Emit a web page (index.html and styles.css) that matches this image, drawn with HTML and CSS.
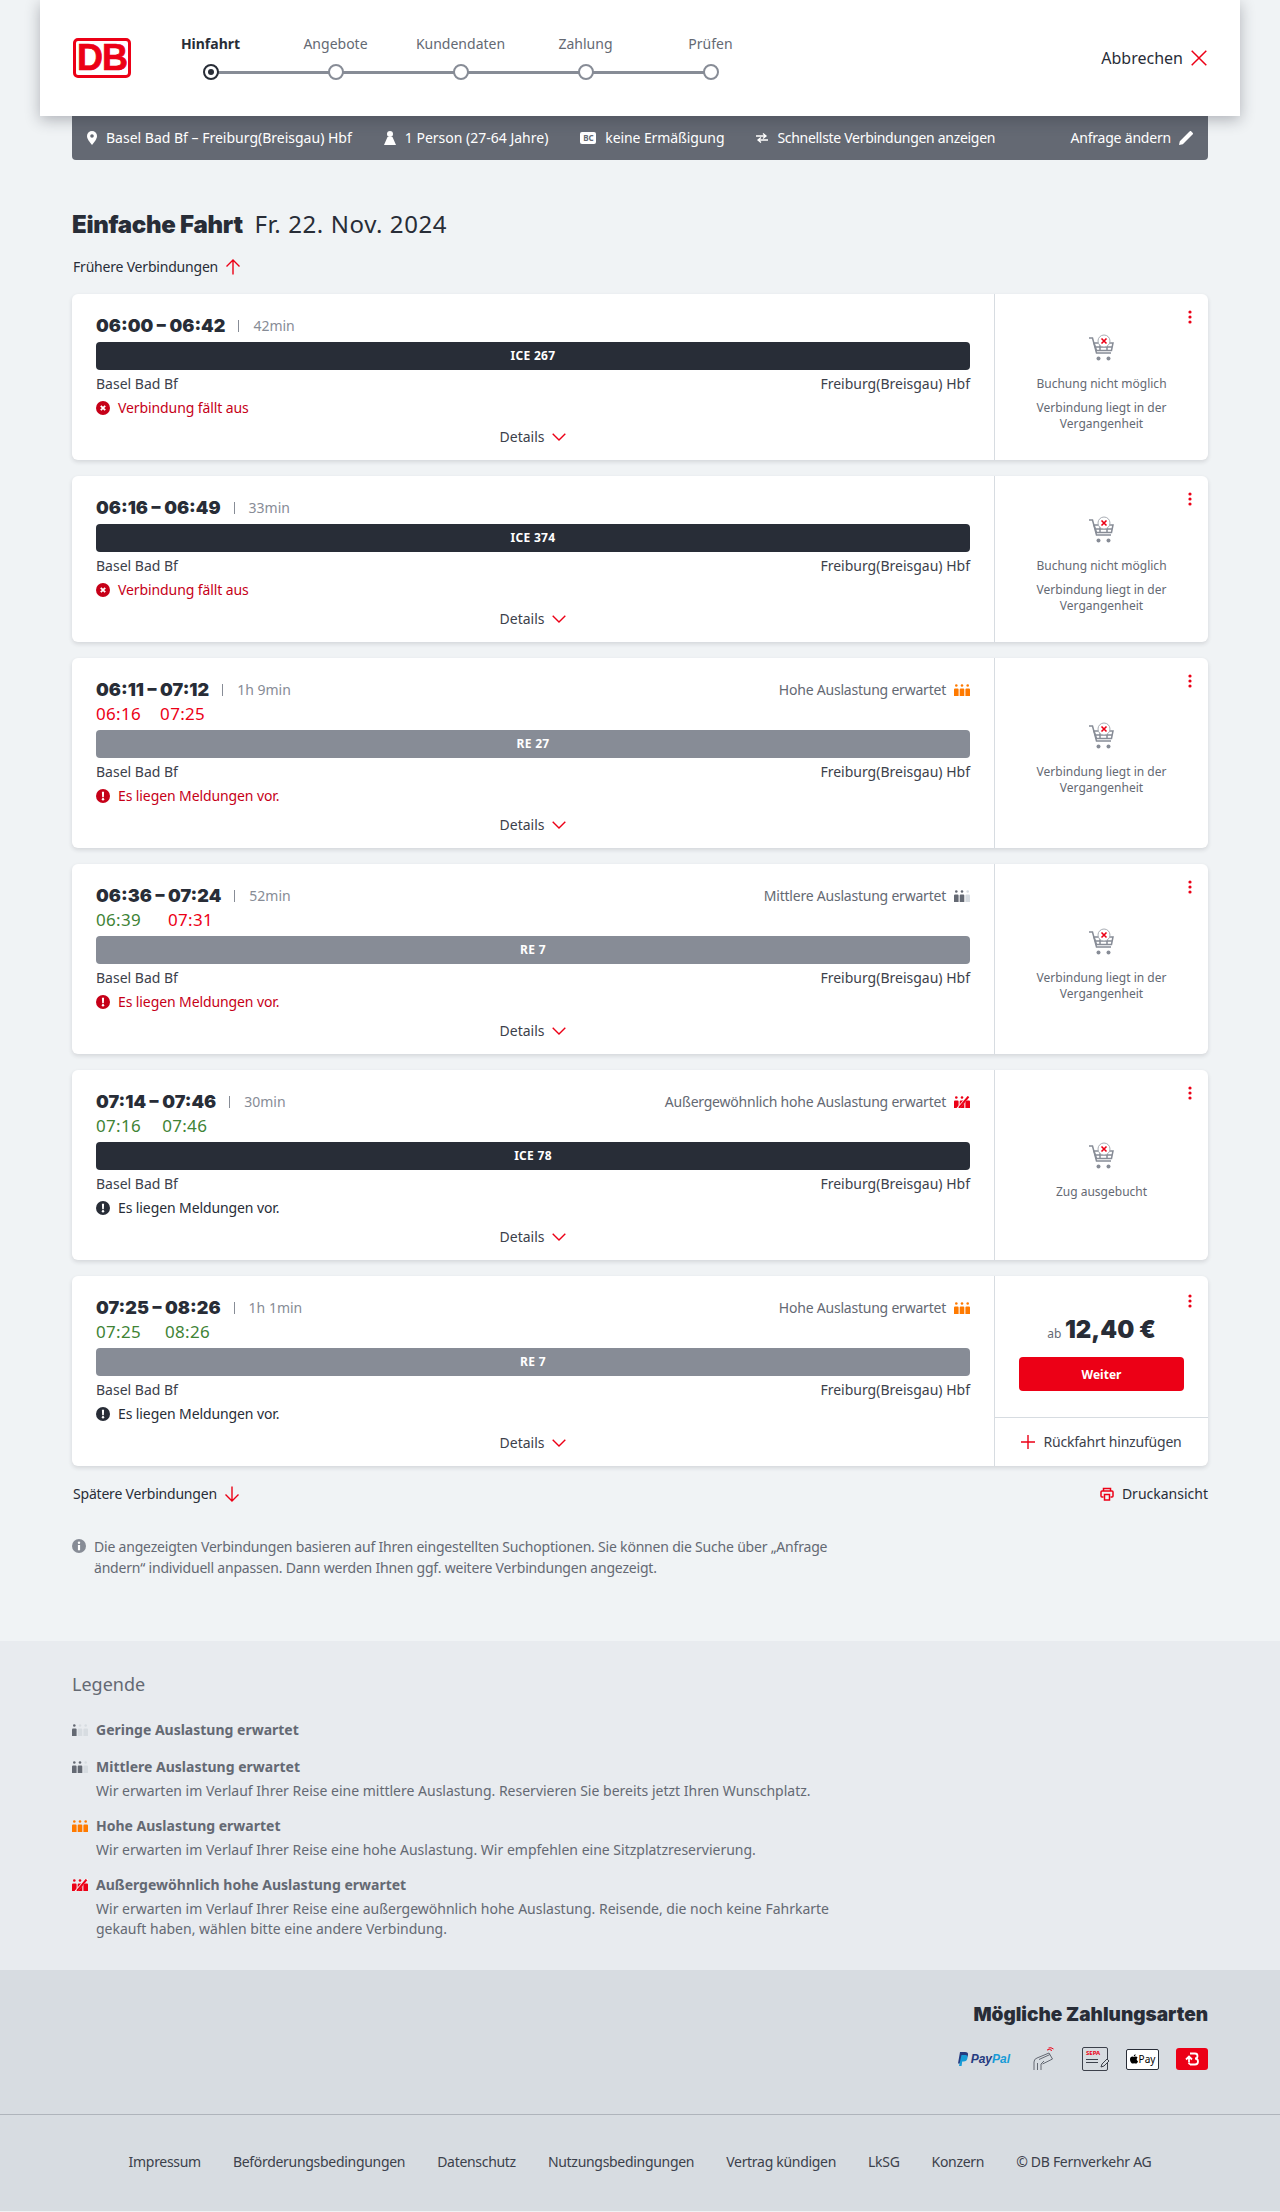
FILE: index.html
```html
<!DOCTYPE html>
<html lang="de">

<head>
    <title>Reiseauskunft</title>
    <meta charset="utf-8">
    <meta name="viewport" content="width=device-width, initial-scale=1.0">
    <link rel="stylesheet" href="styles.css">
</head>

<body>

    <svg class="sprites" aria-hidden="true">
        <symbol id="i-cart" viewBox="0 0 28 28">
            <path d="M1 4h3.5l4 15h14.500" fill="none" stroke="#878c96" stroke-width="1.500"/>
            <path d="M6 9h19l-1.500 7.500h-15zM7.500 13h16.500M12 9.500v7M19 9.500v7" fill="none" stroke="#878c96" stroke-width="1.500"/>
            <circle cx="10.500" cy="24.500" r="2" fill="#878c96"/>
            <circle cx="20.500" cy="24.500" r="2" fill="#878c96"/>
            <circle cx="16" cy="7" r="6" fill="#fff" stroke="#a9adb4" stroke-width="1"/>
            <path d="M13.500 4.500l5 5M18.500 4.500l-5 5" stroke="#ec0016" stroke-width="1.600"/>
        </symbol>
        <symbol id="i-load1" viewBox="0 0 16 12">
            <g fill="#d7dce1"><circle cx="8" cy="1.500" r="1.300"/><circle cx="13.700" cy="1.500" r="1.300"/><path d="M5.700 5.500q0-1 1-1h2.600q1 0 1 1V12H5.700zM11.400 5.500q0-1 1-1h2.600q1 0 1 1V12h-4.600z"/></g>
            <g fill="#646973"><circle cx="2.300" cy="1.500" r="1.300"/><path d="M0 5.500q0-1 1-1h2.600q1 0 1 1V12H0z"/></g>
        </symbol>
        <symbol id="i-load2" viewBox="0 0 16 12">
            <g fill="#d7dce1"><circle cx="13.700" cy="1.500" r="1.300"/><path d="M11.400 5.500q0-1 1-1h2.600q1 0 1 1V12h-4.600z"/></g>
            <g fill="#646973"><circle cx="2.300" cy="1.500" r="1.300"/><circle cx="8" cy="1.500" r="1.300"/><path d="M0 5.500q0-1 1-1h2.600q1 0 1 1V12H0zM5.700 5.500q0-1 1-1h2.600q1 0 1 1V12H5.700z"/></g>
        </symbol>
        <symbol id="i-load3" viewBox="0 0 16 12">
            <g fill="#ff7a00"><circle cx="2.300" cy="1.500" r="1.300"/><circle cx="8" cy="1.500" r="1.300"/><circle cx="13.700" cy="1.500" r="1.300"/><path d="M0 5.500q0-1 1-1h2.600q1 0 1 1V12H0zM5.700 5.500q0-1 1-1h2.600q1 0 1 1V12H5.700zM11.400 5.500q0-1 1-1h2.600q1 0 1 1V12h-4.600z"/></g>
        </symbol>
        <symbol id="i-load4" viewBox="0 0 16 12">
            <g fill="#ec0016"><circle cx="2.300" cy="1.500" r="1.300"/><circle cx="8" cy="1.500" r="1.300"/><path d="M0 5.500q0-1 1-1h2.600q1 0 1 1V12H0zM5.700 5.500q0-1 1-1h2.600q1 0 1 1V12H5.700zM11.400 5.500q0-1 1-1h2.600q1 0 1 1V12h-4.600z"/></g>
            <path d="M3 13.500L15.500 -1" stroke="#fff" stroke-width="2.600"/>
            <path d="M5 12L14.500 0.500" stroke="#ec0016" stroke-width="2"/>
        </symbol>
        <symbol id="i-chevron" viewBox="0 0 14 8">
            <path d="M.7.7L7 7l6.300-6.300" fill="none" stroke="#ec0016" stroke-width="1.400"/>
        </symbol>
        <symbol id="i-dots" viewBox="0 0 4 14">
            <circle cx="2" cy="2" r="1.600" fill="#ec0016"/><circle cx="2" cy="7" r="1.600" fill="#ec0016"/><circle cx="2" cy="12" r="1.600" fill="#ec0016"/>
        </symbol>
        <symbol id="i-cross" viewBox="0 0 14 14">
            <circle cx="7" cy="7" r="7" fill="#c60018"/>
            <path d="M4.800 4.800l4.400 4.400M9.200 4.800l-4.400 4.400" stroke="#fff" stroke-width="1.800"/>
        </symbol>
        <symbol id="i-warn" viewBox="0 0 14 14">
            <circle cx="7" cy="7" r="7"/>
            <path d="M5.900 2.800h2.200l-.3 5.400H6.200z" fill="#fff"/>
            <circle cx="7" cy="10.300" r="1.200" fill="#fff"/>
        </symbol>
    </svg>

    <header class="kopf">
        <div class="logo"><span>DB</span></div>
        <ol class="schritte">
            <li class="schritt aktiv"><span>Hinfahrt</span><i></i></li>
            <li class="schritt"><span>Angebote</span><i></i></li>
            <li class="schritt"><span>Kundendaten</span><i></i></li>
            <li class="schritt"><span>Zahlung</span><i></i></li>
            <li class="schritt"><span>Prüfen</span><i></i></li>
        </ol>
        <a class="abbrechen">Abbrechen
            <svg viewBox="0 0 16 16" width="16" height="16"><path d="M.7.7l14.600 14.600M15.300.7L.7 15.300" stroke="#ec0016" stroke-width="1.500"/></svg>
        </a>
    </header>

    <main class="inhalt">
        <div class="suchleiste">
            <span class="such-item such-ort">
                <svg viewBox="0 0 10 14" width="10" height="14"><path d="M5 0a5 5 0 0 1 5 5c0 3.500-5 9-5 9S0 8.500 0 5a5 5 0 0 1 5-5z" fill="#fff"/><circle cx="5" cy="5" r="1.800" fill="#646973"/></svg>
                Basel Bad Bf – Freiburg(Breisgau) Hbf</span>
            <span class="such-item such-person">
                <svg viewBox="0 0 12 14" width="12" height="14"><circle cx="6" cy="3" r="3" fill="#fff"/><path d="M3.500 6h5L12 14H0z" fill="#fff"/></svg>
                1 Person (27-64 Jahre)</span>
            <span class="such-item such-bc"><b class="bc">BC</b>keine Ermäßigung</span>
            <span class="such-item such-option">
                <svg viewBox="0 0 12 10" width="12" height="10"><path d="M0 3h9M7 .5L10 3 7 5.500M12 7H3M5 4.500L2 7l3 2.500" fill="none" stroke="#fff" stroke-width="1.300"/></svg>
                Schnellste Verbindungen anzeigen</span>
            <span class="such-item such-aendern">Anfrage ändern
                <svg viewBox="0 0 14 14" width="14" height="14"><path d="M0 14l.8-3.800L10 1l3 3-9.200 9.200zM10.800.2q.7-.5 1.300 0l1.700 1.700q.5.600 0 1.300l-1 1-3-3z" fill="#fff"/></svg>
            </span>
        </div>

        <h1 class="titel"><strong>Einfache Fahrt</strong> <span>Fr. 22. Nov. 2024</span></h1>

        <a class="blaettern">Frühere Verbindungen
            <svg viewBox="0 0 16 16" width="16" height="16"><path d="M8 15.500V1M1.500 7.500L8 1l6.500 6.500" fill="none" stroke="#ec0016" stroke-width="1.400"/></svg>
        </a>

        <section class="liste">

            <article class="ret">
                <div class="ret-haupt">
                    <div class="zeiten">
                        <span class="ab">06:00 –&nbsp;</span><span class="an">06:42</span>
                        <span class="dauer">42min</span>
                    </div>
                    <div class="zug zug-fern">ICE 267</div>
                    <div class="orte"><span>Basel Bad Bf</span><span>Freiburg(Breisgau) Hbf</span></div>
                    <div class="meldung rot"><svg><use href="#i-cross"/></svg>Verbindung fällt aus</div>
                    <a class="details">Details <svg><use href="#i-chevron"/></svg></a>
                </div>
                <aside class="ret-seite">
                    <svg class="punkte"><use href="#i-dots"/></svg>
                    <svg class="wagen"><use href="#i-cart"/></svg>
                    <p class="hinweis">Buchung nicht möglich</p>
                    <p class="hinweis zweite">Verbindung liegt in der Vergangenheit</p>
                </aside>
            </article>

            <article class="ret">
                <div class="ret-haupt">
                    <div class="zeiten">
                        <span class="ab">06:16 –&nbsp;</span><span class="an">06:49</span>
                        <span class="dauer">33min</span>
                    </div>
                    <div class="zug zug-fern">ICE 374</div>
                    <div class="orte"><span>Basel Bad Bf</span><span>Freiburg(Breisgau) Hbf</span></div>
                    <div class="meldung rot"><svg><use href="#i-cross"/></svg>Verbindung fällt aus</div>
                    <a class="details">Details <svg><use href="#i-chevron"/></svg></a>
                </div>
                <aside class="ret-seite">
                    <svg class="punkte"><use href="#i-dots"/></svg>
                    <svg class="wagen"><use href="#i-cart"/></svg>
                    <p class="hinweis">Buchung nicht möglich</p>
                    <p class="hinweis zweite">Verbindung liegt in der Vergangenheit</p>
                </aside>
            </article>

            <article class="ret">
                <div class="ret-haupt">
                    <div class="zeiten">
                        <span class="ab">06:11 –&nbsp;</span><span class="an">07:12</span>
                        <span class="dauer">1h 9min</span>
                        <span class="auslastung">Hohe Auslastung erwartet <svg><use href="#i-load3"/></svg></span>
                        <span class="echt spaet">06:16</span><span class="echt spaet">07:25</span>
                    </div>
                    <div class="zug zug-regio">RE 27</div>
                    <div class="orte"><span>Basel Bad Bf</span><span>Freiburg(Breisgau) Hbf</span></div>
                    <div class="meldung rot"><svg><use href="#i-warn"/></svg>Es liegen Meldungen vor.</div>
                    <a class="details">Details <svg><use href="#i-chevron"/></svg></a>
                </div>
                <aside class="ret-seite">
                    <svg class="punkte"><use href="#i-dots"/></svg>
                    <svg class="wagen"><use href="#i-cart"/></svg>
                    <p class="hinweis">Verbindung liegt in der Vergangenheit</p>
                </aside>
            </article>

            <article class="ret">
                <div class="ret-haupt">
                    <div class="zeiten">
                        <span class="ab">06:36 –&nbsp;</span><span class="an">07:24</span>
                        <span class="dauer">52min</span>
                        <span class="auslastung">Mittlere Auslastung erwartet <svg><use href="#i-load2"/></svg></span>
                        <span class="echt">06:39</span><span class="echt spaet">07:31</span>
                    </div>
                    <div class="zug zug-regio">RE 7</div>
                    <div class="orte"><span>Basel Bad Bf</span><span>Freiburg(Breisgau) Hbf</span></div>
                    <div class="meldung rot"><svg><use href="#i-warn"/></svg>Es liegen Meldungen vor.</div>
                    <a class="details">Details <svg><use href="#i-chevron"/></svg></a>
                </div>
                <aside class="ret-seite">
                    <svg class="punkte"><use href="#i-dots"/></svg>
                    <svg class="wagen"><use href="#i-cart"/></svg>
                    <p class="hinweis">Verbindung liegt in der Vergangenheit</p>
                </aside>
            </article>

            <article class="ret">
                <div class="ret-haupt">
                    <div class="zeiten">
                        <span class="ab">07:14 –&nbsp;</span><span class="an">07:46</span>
                        <span class="dauer">30min</span>
                        <span class="auslastung">Außergewöhnlich hohe Auslastung erwartet <svg><use href="#i-load4"/></svg></span>
                        <span class="echt">07:16</span><span class="echt">07:46</span>
                    </div>
                    <div class="zug zug-fern">ICE 78</div>
                    <div class="orte"><span>Basel Bad Bf</span><span>Freiburg(Breisgau) Hbf</span></div>
                    <div class="meldung"><svg><use href="#i-warn"/></svg>Es liegen Meldungen vor.</div>
                    <a class="details">Details <svg><use href="#i-chevron"/></svg></a>
                </div>
                <aside class="ret-seite">
                    <svg class="punkte"><use href="#i-dots"/></svg>
                    <svg class="wagen"><use href="#i-cart"/></svg>
                    <p class="hinweis">Zug ausgebucht</p>
                </aside>
            </article>

            <article class="ret">
                <div class="ret-haupt">
                    <div class="zeiten">
                        <span class="ab">07:25 –&nbsp;</span><span class="an">08:26</span>
                        <span class="dauer">1h 1min</span>
                        <span class="auslastung">Hohe Auslastung erwartet <svg><use href="#i-load3"/></svg></span>
                        <span class="echt">07:25</span><span class="echt">08:26</span>
                    </div>
                    <div class="zug zug-regio">RE 7</div>
                    <div class="orte"><span>Basel Bad Bf</span><span>Freiburg(Breisgau) Hbf</span></div>
                    <div class="meldung"><svg><use href="#i-warn"/></svg>Es liegen Meldungen vor.</div>
                    <a class="details">Details <svg><use href="#i-chevron"/></svg></a>
                </div>
                <aside class="ret-seite ret-kauf">
                    <svg class="punkte"><use href="#i-dots"/></svg>
                    <div class="preis"><small>ab</small> <strong>12,40 €</strong></div>
                    <button class="weiter">Weiter</button>
                    <a class="rueckfahrt">
                        <svg viewBox="0 0 14 14" width="14" height="14"><path d="M7 0v14M0 7h14" stroke="#ec0016" stroke-width="1.400"/></svg>
                        Rückfahrt hinzufügen</a>
                </aside>
            </article>

        </section>

        <div class="unten">
            <a class="blaettern">Spätere Verbindungen
                <svg viewBox="0 0 16 16" width="16" height="16"><path d="M8 .5V15M1.500 8.500L8 15l6.500-6.500" fill="none" stroke="#ec0016" stroke-width="1.400"/></svg>
            </a>
            <a class="druck">
                <svg viewBox="0 0 14 14" width="14" height="14"><path d="M3.500 4V1.500h7V4M3.500 10H2q-1 0-1-1V5q0-1 1-1h10q1 0 1 1v4q0 1-1 1h-1.500" fill="none" stroke="#ec0016" stroke-width="1.500"/><path d="M4.500 7.500h5v5.500h-5z" fill="none" stroke="#ec0016" stroke-width="1.500"/></svg>
                Druckansicht</a>
        </div>

        <p class="info">
            <svg viewBox="0 0 14 14" width="14" height="14"><circle cx="7" cy="7" r="7" fill="#878c96"/><circle cx="7" cy="3.700" r="1.200" fill="#fff"/><path d="M5.900 6h2.200v5.300H5.900z" fill="#fff"/></svg>
            <span>Die angezeigten Verbindungen basieren auf Ihren eingestellten Suchoptionen. Sie können die Suche über „Anfrage ändern“ individuell anpassen. Dann werden Ihnen ggf. weitere Verbindungen angezeigt.</span>
        </p>
    </main>

    <section class="legende">
        <div class="legende-inner">
            <h2>Legende</h2>
            <div class="leg-item">
                <h3><svg><use href="#i-load1"/></svg>Geringe Auslastung erwartet</h3>
            </div>
            <div class="leg-item">
                <h3><svg><use href="#i-load2"/></svg>Mittlere Auslastung erwartet</h3>
                <p>Wir erwarten im Verlauf Ihrer Reise eine mittlere Auslastung. Reservieren Sie bereits jetzt Ihren Wunschplatz.</p>
            </div>
            <div class="leg-item">
                <h3><svg><use href="#i-load3"/></svg>Hohe Auslastung erwartet</h3>
                <p>Wir erwarten im Verlauf Ihrer Reise eine hohe Auslastung. Wir empfehlen eine Sitzplatzreservierung.</p>
            </div>
            <div class="leg-item">
                <h3><svg><use href="#i-load4"/></svg>Außergewöhnlich hohe Auslastung erwartet</h3>
                <p>Wir erwarten im Verlauf Ihrer Reise eine außergewöhnlich hohe Auslastung. Reisende, die noch keine Fahrkarte gekauft haben, wählen bitte eine andere Verbindung.</p>
            </div>
        </div>
    </section>

    <section class="zahlung">
        <h2>Mögliche Zahlungsarten</h2>
        <div class="zahl-icons">
            <span class="paypal">
                <svg viewBox="0 0 12 14" width="12" height="14"><path d="M3 0h5q3.500 0 3 3-.6 4-4.500 4H5l-.8 4.500H1z" fill="#253b80"/><path d="M4.500 3h4q2.500.3 2 3-.6 3.500-4 3.500H5.200L4.600 14H2z" fill="#179bd7"/></svg>
                <b>Pay</b><b class="pal">Pal</b>
            </span>
            <svg class="karte" viewBox="0 0 22 24" width="22" height="24">
                <path d="M4 11L16 6l3.500 6-10 5M6 12.500l11-5M1 23v-8q0-3 3-4M4.500 23v-7M8 23v-6l3-3" fill="none" stroke="#646973" stroke-width="1"/>
                <path d="M14 3q2.500-1.500 5 .5M15.500 1q2.500-1 5 1" fill="none" stroke="#ec0016" stroke-width="1"/>
            </svg>
            <span class="sepa"><b>SEPA</b><i></i><i></i>
                <svg viewBox="0 0 10 10" width="10" height="10"><path d="M1 9l1-3 5-5 2 2-5 5z" fill="#d7dce1" stroke="#3c414b"/></svg>
            </span>
            <span class="applepay">
                <svg viewBox="0 0 10 12" width="8" height="10"><path d="M7 3c1 0 2 .5 2.500 1.300-1.800 1.200-1.400 3.600.5 4.400-.6 1.500-1.500 3-2.700 3-.8 0-1.200-.5-2.100-.5s-1.400.5-2.100.5C1.800 11.700 0 9 0 6.500 0 4.200 1.500 3 3 3c.8 0 1.500.5 2 .5S6.100 3 7 3zM7 0c.1 1.400-1 2.700-2.300 2.600C4.600 1.300 5.800.1 7 0z" fill="#000"/></svg>
                Pay
            </span>
            <span class="dbbahn">
                <svg viewBox="0 0 14 14" width="14" height="14"><path d="M5 1.500h5q2.500 0 2.500 2.500T10 6.500q3 0 3 3t-3 3H5M5 12.500l-1.500-2M1 7.500l3-3 3 3M4 5v5" fill="none" stroke="#fff" stroke-width="1.800"/></svg>
            </span>
        </div>
    </section>

    <footer class="fuss">
        <a>Impressum</a>
        <a>Beförderungsbedingungen</a>
        <a>Datenschutz</a>
        <a>Nutzungsbedingungen</a>
        <a>Vertrag kündigen</a>
        <a>LkSG</a>
        <a>Konzern</a>
        <a>© DB Fernverkehr AG</a>
    </footer>

</body>

</html>
```

FILE: styles.css
```css
* {
    box-sizing: border-box;
}

body {
    margin: 0;
    background-color: #f0f3f5;
    color: #282d37;
    font-family: "Noto Sans", "Liberation Sans", sans-serif;
    font-size: 14px;
    line-height: 24px;
}

h1, h2, h3, p, ol {
    margin: 0;
    padding: 0;
}

.sprites {
    display: none;
}

/* kopf */

.kopf {
    position: relative;
    z-index: 2;
    display: flex;
    align-items: center;
    height: 116px;
    margin: 0 40px;
    padding: 0 33px;
    background-color: #fff;
    box-shadow: 0 4px 14px rgba(40, 45, 55, 0.32);
}

.logo {
    display: flex;
    align-items: center;
    justify-content: center;
    flex: none;
    width: 58px;
    height: 40px;
    border: 3px solid #ec0016;
    border-radius: 5px;
    background-color: #fff;
    color: #ec0016;
    font-family: "Liberation Sans", sans-serif;
    font-size: 36px;
    font-weight: 700;
    line-height: 34px;
}

.logo span {
    -webkit-text-stroke: 0.7px #ec0016;
    letter-spacing: -1px;
}

.schritte {
    display: flex;
    list-style: none;
    margin: 0 0 4px 17px;
}

.schritt {
    position: relative;
    display: flex;
    flex-direction: column;
    align-items: center;
    width: 125px;
    color: #646973;
}

.schritt span {
    height: 24px;
    margin-bottom: 8px;
}

.schritt i {
    position: relative;
    z-index: 1;
    width: 16px;
    height: 16px;
    border: 2px solid #878c96;
    border-radius: 50%;
    background-color: #fff;
}

.schritt:not(:last-child)::after {
    content: "";
    position: absolute;
    left: 50%;
    bottom: 6.5px;
    width: 100%;
    height: 3px;
    background-color: #878c96;
}

.aktiv {
    color: #282d37;
    font-weight: 700;
}

.aktiv i {
    border-color: #282d37;
}

.aktiv i::after {
    content: "";
    display: block;
    width: 6px;
    height: 6px;
    margin: 3px;
    border-radius: 50%;
    background-color: #282d37;
}

.abbrechen {
    display: flex;
    align-items: center;
    gap: 8px;
    margin-left: auto;
    font-size: 16px;
}

/* suchleiste */

.inhalt {
    margin: 0 72px 63px;
}

.suchleiste {
    display: flex;
    align-items: center;
    height: 44px;
    padding: 0 15px;
    border-radius: 0 0 4px 4px;
    background-color: #646973;
    color: #fff;
    gap: 32px;
}

.such-item {
    display: flex;
    align-items: center;
    gap: 9px;
}

.such-bc {
    letter-spacing: -0.1px;
}

.such-option {
    letter-spacing: -0.3px;
}

.such-aendern {
    margin-left: auto;
    gap: 8px;
    letter-spacing: -0.2px;
}

.bc {
    display: inline-block;
    width: 16px;
    height: 12px;
    border-radius: 2px;
    background-color: #fff;
    color: #646973;
    font-size: 8px;
    line-height: 12px;
    text-align: center;
}

.titel {
    height: 32px;
    margin-top: 48px;
    font-size: 24px;
    font-weight: 400;
    line-height: 32px;
    letter-spacing: 0.6px;
}

.titel strong {
    margin-right: 5px;
    font-family: "Inter", sans-serif;
    font-weight: 900;
    letter-spacing: -0.3px;
}

.blaettern {
    display: flex;
    align-items: center;
    gap: 7px;
    height: 24px;
    margin-left: 1px;
    letter-spacing: -0.2px;
}

.titel + .blaettern {
    margin-top: 15px;
}

/* verbindungen */

.liste {
    display: flex;
    flex-direction: column;
    gap: 16px;
    margin-top: 15px;
}

.ret {
    display: flex;
    border-radius: 6px;
    background-color: #fff;
    box-shadow: 0 2px 4px rgba(40, 45, 55, 0.14);
}

.ret-haupt {
    flex: 1;
    padding: 20px 24px 11px;
}

.zeiten {
    display: grid;
    grid-template-columns: auto auto auto 1fr;
    align-items: center;
}

.ab, .an {
    font-family: "Inter", sans-serif;
    font-size: 18px;
    font-weight: 900;
    white-space: pre;
}

.dauer {
    margin-left: 13px;
    padding-left: 15px;
    color: #878c96;
    font-size: 14px;
    background: linear-gradient(#878c96, #878c96) no-repeat 0 center / 1px 12px;
}

.auslastung {
    display: flex;
    align-items: center;
    justify-content: flex-end;
    gap: 8px;
    color: #646973;
    letter-spacing: -0.22px;
}

.auslastung svg {
    width: 16px;
    height: 12px;
}

.echt {
    color: #408335;
    font-size: 17px;
    letter-spacing: 0.3px;
}

.spaet {
    color: #ec0016;
}

.zug {
    height: 28px;
    margin-top: 4px;
    border-radius: 4px;
    color: #fff;
    font-size: 12px;
    font-weight: 700;
    line-height: 28px;
    letter-spacing: 0.3px;
    text-align: center;
}

.zug-fern {
    background-color: #282d37;
}

.zug-regio {
    background-color: #878c96;
}

.orte {
    display: flex;
    justify-content: space-between;
    height: 22px;
    margin-top: 3px;
    line-height: 22px;
    color: #3c414b;
}

.meldung {
    display: flex;
    align-items: center;
    gap: 8px;
    height: 24px;
    margin-top: 1px;
    letter-spacing: -0.1px;
}

.meldung svg {
    width: 14px;
    height: 14px;
    fill: #282d37;
}

.rot {
    color: #c60018;
}

.rot svg {
    fill: #c60018;
}

.details {
    display: flex;
    align-items: center;
    justify-content: center;
    gap: 8px;
    height: 24px;
    margin-top: 5px;
    color: #3c414b;
}

.details svg {
    width: 14px;
    height: 8px;
}

.ret-seite {
    position: relative;
    display: flex;
    flex-direction: column;
    align-items: center;
    justify-content: center;
    width: 214px;
    padding-top: 12px;
    border-left: 1px solid #d7dce1;
}

.punkte {
    position: absolute;
    top: 16px;
    right: 16px;
    width: 4px;
    height: 14px;
}

.wagen {
    width: 28px;
    height: 28px;
    margin-bottom: 14px;
}

.hinweis {
    max-width: 150px;
    color: #646973;
    font-size: 12px;
    line-height: 16px;
    text-align: center;
}

.zweite {
    margin-top: 8px;
}

.ret-kauf {
    justify-content: flex-start;
    padding-top: 38px;
}

.ret-kauf .punkte {
    top: 18px;
}

.preis {
    height: 32px;
    line-height: 32px;
}

.preis small {
    color: #646973;
    font-size: 12px;
}

.preis strong {
    font-family: "Inter", sans-serif;
    font-size: 24px;
    font-weight: 900;
}

.weiter {
    width: 165px;
    height: 34px;
    margin-top: 11px;
    border: none;
    border-radius: 4px;
    background-color: #ec0016;
    color: #fff;
    font-family: inherit;
    font-size: 12px;
    font-weight: 700;
}

.rueckfahrt {
    display: flex;
    align-items: center;
    justify-content: center;
    gap: 8px;
    width: 100%;
    height: 49px;
    margin-top: auto;
    border-top: 1px solid #d7dce1;
    color: #3c414b;
    letter-spacing: -0.2px;
}

.unten {
    display: flex;
    justify-content: space-between;
    margin-top: 16px;
}

.druck {
    display: flex;
    align-items: center;
    gap: 8px;
}

.info {
    display: flex;
    gap: 8px;
    max-width: 760px;
    margin-top: 30px;
    color: #646973;
    line-height: 21px;
    letter-spacing: -0.2px;
}

.info svg {
    flex: none;
    margin-top: 3px;
}

/* legende */

.legende {
    padding: 31px 72px;
    background-color: #e8ebef;
    color: #646973;
}

.legende h2 {
    font-size: 18px;
    font-weight: 400;
}

.legende-inner {
    max-width: 760px;
}

.leg-item {
    margin-top: 13px;
    padding-left: 24px;
}

.legende h2 + .leg-item {
    margin-top: 22px;
}

.leg-item h3 {
    position: relative;
    font-size: 14px;
    font-weight: 700;
}

.leg-item h3 svg {
    position: absolute;
    left: -24px;
    top: 6px;
    width: 16px;
    height: 12px;
}

.leg-item p {
    margin-top: 2px;
    line-height: 20px;
}

/* zahlung */

.zahlung {
    height: 144px;
    padding: 31px 72px 0;
    background-color: #d7dce1;
    text-align: right;
}

.zahlung h2 {
    font-family: "Inter", sans-serif;
    font-size: 19px;
    font-weight: 900;
    line-height: 28px;
}

.zahl-icons {
    display: flex;
    align-items: center;
    justify-content: flex-end;
    height: 24px;
    margin-top: 18px;
}

.paypal {
    display: flex;
    align-items: center;
    gap: 2px;
    font-family: "Liberation Sans", sans-serif;
    font-size: 12px;
    font-style: italic;
    color: #253b80;
}

.pal {
    margin-left: -2px;
    color: #179bd7;
}

.karte {
    margin-left: 23px;
}

.sepa {
    position: relative;
    width: 26px;
    height: 24px;
    margin-left: 27px;
    padding: 2px 3px;
    border: 1px solid #3c414b;
    border-radius: 2px;
    line-height: 0;
    text-align: left;
}

.sepa b {
    display: block;
    color: #ec0016;
    font-size: 6px;
    line-height: 7px;
}

.sepa i {
    display: block;
    width: 12px;
    height: 1px;
    margin-top: 2px;
    background-color: #3c414b;
}

.sepa svg {
    position: absolute;
    right: -3px;
    bottom: 2px;
}

.applepay {
    display: flex;
    align-items: center;
    justify-content: center;
    gap: 1px;
    width: 33px;
    height: 21px;
    margin-left: 18px;
    border: 1px solid #282d37;
    border-radius: 2px;
    background-color: #fff;
    color: #000;
    font-size: 10px;
}

.dbbahn {
    display: flex;
    align-items: center;
    justify-content: center;
    width: 32px;
    height: 22px;
    margin-left: 17px;
    border-radius: 3px;
    background-color: #ec0016;
}

/* fuss */

.fuss {
    display: flex;
    justify-content: center;
    gap: 32px;
    height: 97px;
    padding-top: 35px;
    border-top: 1px solid #afb4bb;
    background-color: #d7dce1;
    color: #3c414b;
    letter-spacing: -0.3px;
}
```
